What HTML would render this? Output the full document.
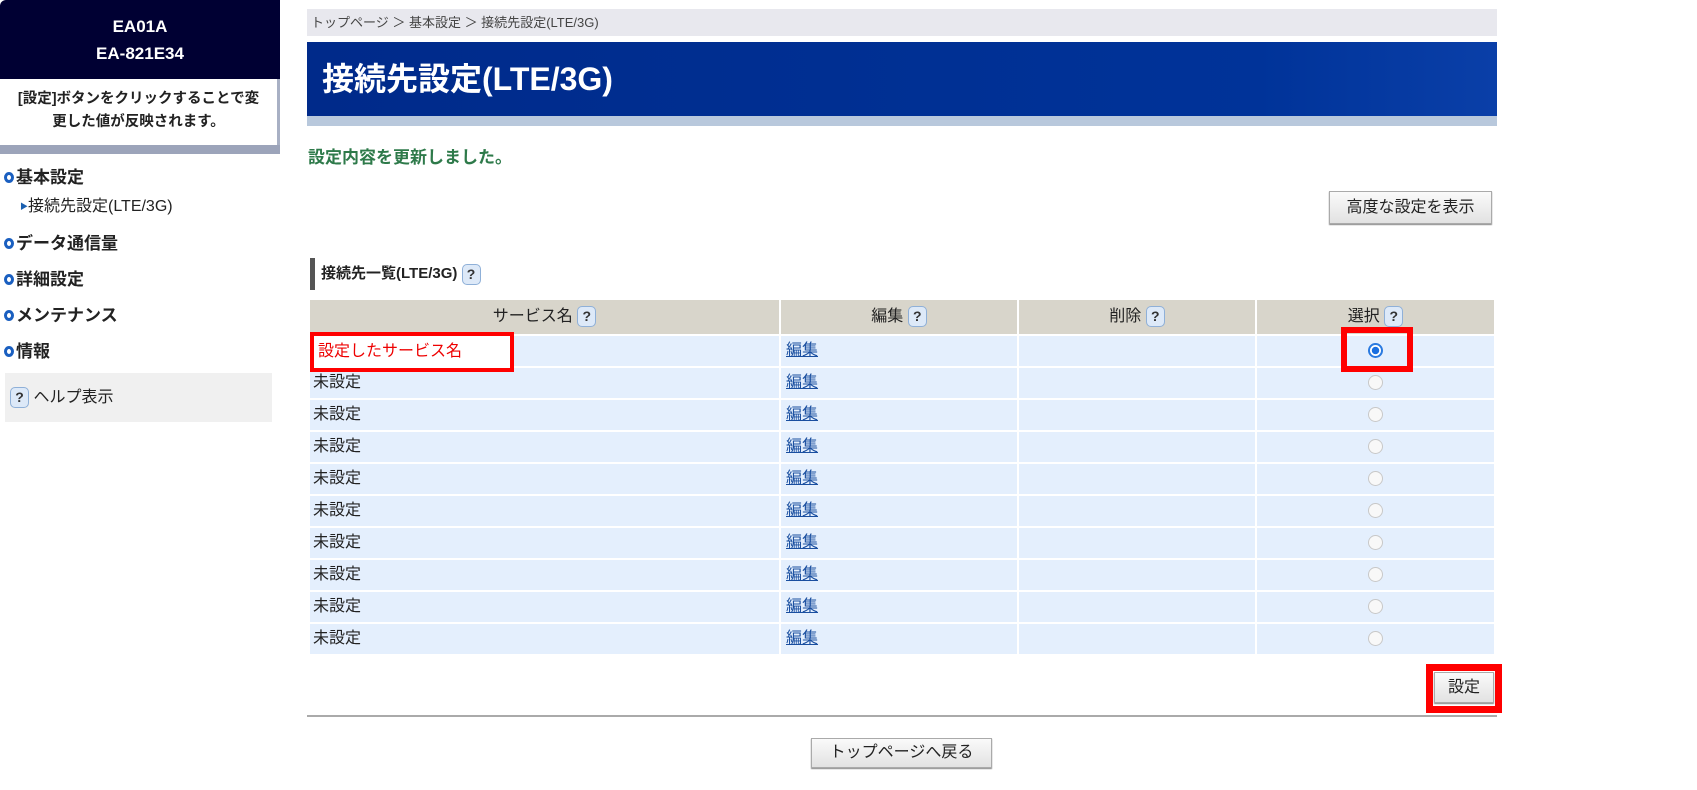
<!DOCTYPE html>
<html><head><meta charset="utf-8"><style>
*{margin:0;padding:0;box-sizing:border-box}
body{width:1697px;height:790px;background:#fff;font-family:"Liberation Sans","Noto Sans CJK JP",sans-serif;color:#222;position:relative;overflow:hidden}
.a{position:absolute}
.q{display:inline-block;width:19px;height:21px;border:1px solid #8fb0d8;border-radius:5px;background:#dde9f8;color:#333;font-size:14px;font-weight:bold;text-align:center;line-height:19px;vertical-align:middle}
.th{position:absolute;top:300px;height:34px;background:#d8d5cb;font-size:16px;text-align:center;line-height:34px}
.cell{position:absolute;height:30px;background:#e4effd;font-size:16px;line-height:30px}
.ed{color:#1a4fa0;text-decoration:underline}
.rd{position:absolute;width:15px;height:15px;border:1px solid #c8c8c8;border-radius:50%;background:#f8f8f8}
.btn{position:absolute;border:1px solid #aaa;background:linear-gradient(#fafafa,#e2e2e2);font-size:16px;text-align:center;box-shadow:0 1px 1px #888}
.bl{display:inline-block;width:10px;height:11px;border:3px solid #1a5fc0;border-radius:50%;margin-right:2px;vertical-align:0}
.m{position:absolute;left:4px;font-size:17px;font-weight:bold;line-height:24px}
</style></head><body>
<div class="a" style="left:0;top:0;width:280px;height:79px;background:#000033;color:#fff;font-weight:bold;font-size:17px;text-align:center;line-height:27px;padding-top:13px;border-radius:6px 0 0 0">EA01A<br>EA-821E34</div>
<div class="a" style="left:0;top:79px;width:280px;height:66px;border-right:3px solid #a8b0c4;font-size:14.5px;font-weight:bold;text-align:center;line-height:23px;padding-top:9px">[設定]ボタンをクリックすることで変<br>更した値が反映されます。</div>
<div class="a" style="left:0;top:145px;width:280px;height:9px;background:#9ca4ba"></div>
<div class="m" style="top:166px"><span class="bl"></span>基本設定</div>
<div class="m" style="top:195px;left:20px;font-weight:normal;font-size:16px"><span style="font-size:8px;color:#1a5fb0;vertical-align:middle">▶</span>接続先設定(LTE/3G)</div>
<div class="m" style="top:232px"><span class="bl"></span>データ通信量</div>
<div class="m" style="top:268px"><span class="bl"></span>詳細設定</div>
<div class="m" style="top:304px"><span class="bl"></span>メンテナンス</div>
<div class="m" style="top:340px"><span class="bl"></span>情報</div>
<div class="a" style="left:5px;top:373px;width:267px;height:49px;background:#f0f0f0;font-size:16px;line-height:49px;padding-left:5px"><span class="q">?</span> ヘルプ表示</div>

<div class="a" style="left:307px;top:9px;width:1190px;height:27px;background:#e8e8ee;font-size:13px;line-height:27px;padding-left:4px;color:#444">トップページ ＞ 基本設定 ＞ 接続先設定(LTE/3G)</div>
<div class="a" style="left:307px;top:42px;width:1190px;height:74px;background:linear-gradient(90deg,#002a8a,#003399 80%,#0a3fa8);color:#fff;font-size:32px;font-weight:bold;line-height:74px;padding-left:15px">接続先設定(LTE/3G)</div>
<div class="a" style="left:307px;top:116px;width:1190px;height:10px;background:#b8c8dc"></div>
<div class="a" style="left:308px;top:143px;font-size:17px;font-weight:bold;color:#2e7a4a">設定内容を更新しました。</div>
<div class="btn" style="left:1329px;top:191px;width:163px;height:33px;line-height:31px">高度な設定を表示</div>
<div class="a" style="left:310px;top:258px;width:5px;height:32px;background:#555"></div>
<div class="a" style="left:321px;top:262px;font-size:15px;font-weight:bold;line-height:24px">接続先一覧(LTE/3G) <span class="q">?</span></div>

<div class="th" style="left:310px;width:469px">サービス名 <span class="q">?</span></div>
<div class="th" style="left:781px;width:236px">編集 <span class="q">?</span></div>
<div class="th" style="left:1019px;width:236px">削除 <span class="q">?</span></div>
<div class="th" style="left:1257px;width:237px">選択 <span class="q">?</span></div>

<div id="rows"></div>
<script>
var h='';for(var i=0;i<10;i++){var t=336+i*32;
h+='<div class="cell" style="left:310px;top:'+t+'px;width:469px;padding-left:3px">'+(i==0?'':'未設定')+'</div>';
h+='<div class="cell" style="left:781px;top:'+t+'px;width:236px;padding-left:5px"><span class="ed">編集</span></div>';
h+='<div class="cell" style="left:1019px;top:'+t+'px;width:236px"></div>';
h+='<div class="cell" style="left:1257px;top:'+t+'px;width:237px"></div>';
h+='<div class="rd" style="left:1368px;top:'+(t+7)+'px'+(i==0?';border:2px solid #2a7ae0;background:radial-gradient(#1a6fe0 45%,#fff 50%)':'')+'"></div>';}
document.getElementById('rows').innerHTML=h;
</script>
<div class="a" style="left:310px;top:332px;width:204px;height:40px;border:4px solid #f00;background:#fff;color:#e00;font-size:16px;line-height:32px;padding-left:4px">設定したサービス名</div>
<div class="a" style="left:1341px;top:327px;width:72px;height:45px;border:6px solid #f00"></div>
<div class="btn" style="left:1434px;top:672px;width:60px;height:31px;line-height:29px">設定</div>
<div class="a" style="left:1426px;top:664px;width:76px;height:49px;border:7px solid #f00"></div>
<div class="a" style="left:307px;top:715px;width:1190px;height:2px;background:#aaa"></div>
<div class="btn" style="left:811px;top:738px;width:181px;height:30px;line-height:28px">トップページへ戻る</div>
</body></html>
